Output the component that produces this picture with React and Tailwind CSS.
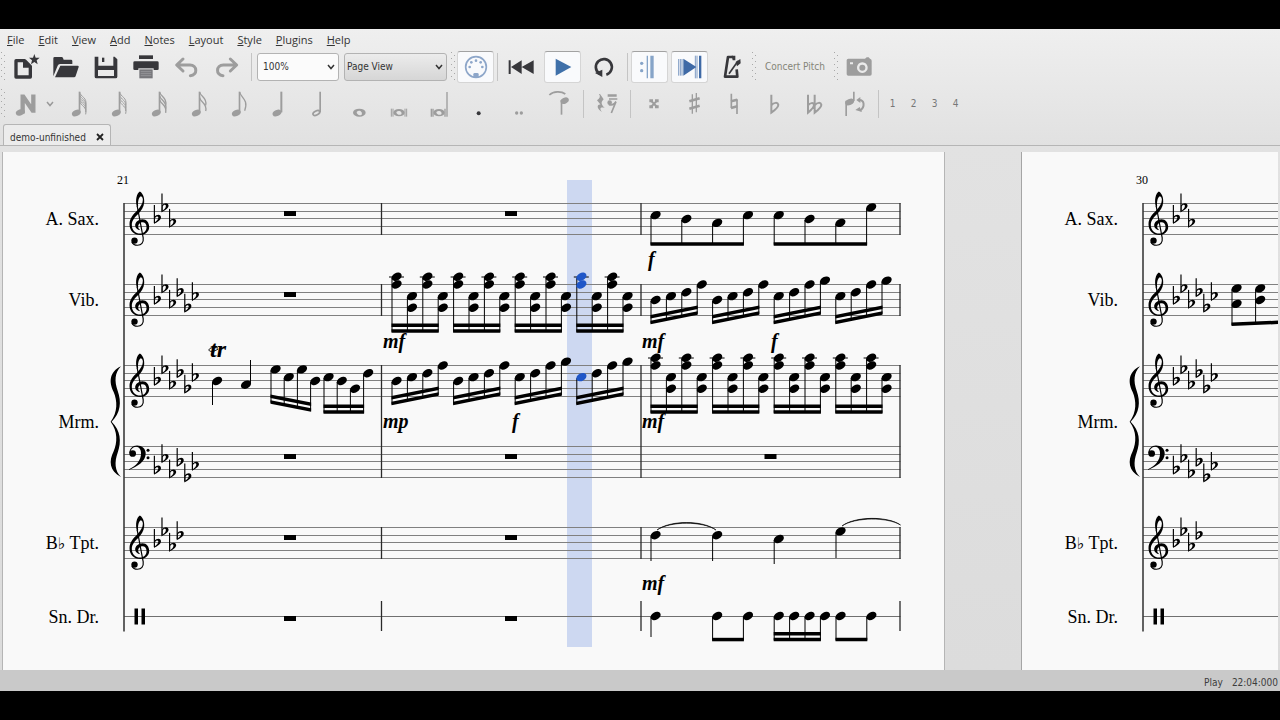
import React, { useState } from "react";

const MENUS = ["File", "Edit", "View", "Add", "Notes", "Layout", "Style", "Plugins", "Help"];

// distance between two neighbouring staff positions (half a space)
const STEP = 3.875;

const STAVES = [
  { name: "A. Sax.", top: 203.5, label: 225, flats: 3, clef: "treble" },
  { name: "Vib.", top: 284.5, label: 306, flats: 6, clef: "treble" },
  { name: "Mrm.", top: 365.5, label: 428, flats: 6, clef: "treble" },
  { name: "", top: 446.5, label: 0, flats: 6, clef: "bass" },
  { name: "Tpt.", top: 527.5, label: 549, flats: 4, clef: "treble" },
];
const DRUM_Y = 616.5;

const FLAT_POSITIONS = [4, 1, 5, 2, 6, 3];

/* ---------- toolbar icons ---------- */

const Icon = ({ children }) => (
  <svg viewBox="0 0 120 96" className="w-10 h-8 shrink-0" fill="currentColor" aria-hidden="true">
    {children}
  </svg>
);

const NewIcon = () => (
  <Icon>
    <path d="M30 29h26l17 17v32H30z" fill="none" stroke="currentColor" strokeWidth="10" strokeLinejoin="round" />
    <path d="M51 27v23h24z" />
    <path d="M85 9l4 11h12l-9 8 3 12-10-7-10 7 3-12-9-8h12z" />
  </Icon>
);

const OpenIcon = () => (
  <Icon>
    <path d="M22 22q0-4 4-4h21q3 0 4 3l2 5h22q4 0 4 4v9H42q-5 0-7 5L22 76z" />
    <path d="M43 44h52q4 0 3 4l-9 27q-1 4-5 4H27z" />
  </Icon>
);

const SaveIcon = () => (
  <Icon>
    <path
      fillRule="evenodd"
      d="M26 17h11v27h45V17h4l8 8v52q0 5-5 5H31q-5 0-5-5zM36 57h48v18H36z"
    />
    <path d="M48 20h7v13h-7z" />
  </Icon>
);

const PrintIcon = () => (
  <Icon>
    <path d="M39 13h42v11H39z" />
    <path d="M26 31h68q4 0 4 4v19q0 3-4 3H26q-4 0-4-3V35q0-4 4-4z" />
    <path d="M37 52h46v31H37z" fill="#ebebeb" />
    <path d="M40 55h40v27H40z" fill="#77777b" />
    <path d="M44 62h32M44 68h32M44 74h32" stroke="#a5a5a8" strokeWidth="2" />
  </Icon>
);

const UndoIcon = () => (
  <Icon>
    <path
      d="M51 24L32 42l19 18M34 42h38c22 0 24 31 1 32"
      fill="none"
      stroke="currentColor"
      strokeWidth="9"
      strokeLinecap="round"
      strokeLinejoin="round"
    />
  </Icon>
);

const RedoIcon = () => (
  <Icon>
    <path
      d="M73 24l19 18-19 18M90 42H52c-22 0-24 31-1 32"
      fill="none"
      stroke="currentColor"
      strokeWidth="9"
      strokeLinecap="round"
      strokeLinejoin="round"
    />
  </Icon>
);

const MidiIcon = () => (
  <Icon>
    <circle cx="60" cy="48" r="31" fill="none" stroke="currentColor" strokeWidth="5" />
    <circle cx="41" cy="48" r="4" />
    <circle cx="46" cy="34" r="4" />
    <circle cx="60" cy="29" r="4" />
    <circle cx="74" cy="34" r="4" />
    <circle cx="79" cy="48" r="4" />
    <path d="M52 80V70q0-4 4-4h8q4 0 4 4v10z" />
  </Icon>
);

const RewindIcon = () => (
  <Icon>
    <path d="M23 28h6v41h-6zM62 28v41L30 48zM98 28v41L62 48z" />
  </Icon>
);

const PlayIcon = () => (
  <Icon>
    <path d="M38 23l47 25-47 26z" />
  </Icon>
);

const LoopIcon = () => (
  <Icon>
    <path d="M67 71a24 24 0 1 0-21-3" fill="none" stroke="currentColor" strokeWidth="8" />
    <path d="M33 66l22-10v22z" />
  </Icon>
);

const RepeatIcon = () => (
  <Icon>
    <circle cx="35" cy="37" r="5" />
    <circle cx="35" cy="59" r="5" />
    <path d="M50 14h4v68h-4zM61 14h10v68H61z" />
  </Icon>
);

const PanIcon = () => (
  <Icon>
    <path d="M26 24v50M31 24v50M36 24v50M76 14v68M81 14v68" stroke="#7f9cc4" strokeWidth="3" />
    <path d="M40 23l39 25-39 26zM87 14h7v68h-7z" />
  </Icon>
);

const MetronomeIcon = () => (
  <Icon>
    <path d="M66 18H51L42 77h37l-2-22" fill="none" stroke="currentColor" strokeWidth="8" strokeLinejoin="round" />
    <path d="M54 68l27-38" stroke="currentColor" strokeWidth="5" />
    <path d="M74 33l14-9 1 13-11 9zM62 14h11v14h-8z" />
  </Icon>
);

const CameraIcon = () => (
  <Icon>
    <path
      fillRule="evenodd"
      d="M28 23h50l5-4h6l4 4q5 1 5 6v40q0 5-5 5H28q-5 0-5-5V28q0-5 5-5zM70 34a16 16 0 1 0 .1 0zM33 34v6h9v-6z"
    />
    <circle cx="70" cy="50" r="9" />
  </Icon>
);

const InputModeIcon = () => (
  <Icon>
    <path d="M46 74V22h8l24 35V22h8v50h-8L54 37v37z" stroke="currentColor" strokeWidth="5" />
    <ellipse cx="43" cy="73" rx="14" ry="9" transform="rotate(-20 43 73)" />
  </Icon>
);

// a filled note with up to five flags
const FlagNoteIcon = ({ flags }) => (
  <Icon>
    <ellipse cx="52" cy="75" rx="14" ry="9" transform="rotate(-25 52 75)" />
    <path d="M59 11h5v62h-5z" />
    {Array.from({ length: flags }, (_, i) => (
      <path
        key={i}
        d={flags === 1 ? "M62 12C64 28 90 34 77 68" : "M62 12C64 27 86 28 80 52"}
        transform={`translate(0 ${(i * 34) / flags})`}
        fill="none"
        stroke="currentColor"
        strokeWidth={flags > 3 ? 3 : 4}
      />
    ))}
  </Icon>
);

const HalfIcon = () => (
  <Icon>
    <ellipse cx="52" cy="75" rx="11" ry="6" transform="rotate(-28 52 75)" fill="none" stroke="currentColor" strokeWidth="5" />
    <path d="M61 11h5v62h-5z" />
  </Icon>
);

const QuarterIcon = () => (
  <Icon>
    <ellipse cx="54" cy="75" rx="14" ry="9" transform="rotate(-25 54 75)" />
    <path d="M64 11h6v62h-6z" />
  </Icon>
);

const WholeIcon = () => (
  <Icon>
    <path fillRule="evenodd" d="M42 74a19 12 0 1 1 38 0a19 12 0 1 1-38 0zM53 72c0 8 9 12 15 8c4-9-8-16-15-8z" />
  </Icon>
);

const BreveIcon = () => (
  <Icon>
    <path fillRule="evenodd" d="M43 74a17 11 0 1 1 34 0a17 11 0 1 1-34 0zM52 72c0 7 9 11 15 7c4-8-8-14-15-7z" />
    <path d="M37 62v24M42 62v24M78 62v24M83 62v24" stroke="currentColor" strokeWidth="3" />
  </Icon>
);

const LongaIcon = () => (
  <Icon>
    <path fillRule="evenodd" d="M43 74a17 11 0 1 1 34 0a17 11 0 1 1-34 0zM52 72c0 7 9 11 15 7c4-8-8-14-15-7z" />
    <path d="M37 62v24M42 62v24M78 62v24M84 12v74" stroke="currentColor" strokeWidth="4" />
  </Icon>
);

const DotIcon = () => (
  <Icon>
    <circle cx="59" cy="76" r="6" />
  </Icon>
);

const DoubleDotIcon = () => (
  <Icon>
    <circle cx="53" cy="75" r="5" />
    <circle cx="67" cy="75" r="5" />
  </Icon>
);

const TieIcon = () => (
  <Icon>
    <path d="M31 21c12-12 36-12 48-3" fill="none" stroke="currentColor" strokeWidth="5" />
    <path d="M65 36h5v44h-5z" />
    <ellipse cx="77" cy="38" rx="13" ry="9" transform="rotate(-25 77 38)" />
  </Icon>
);

const RestIcon = () => (
  <Icon>
    <path d="M39 18l11 16c-8 8-9 14 3 26c-14-4-16 3-8 12c-17-9-16-24-4-22L30 37c9-7 11-12 6-19z" />
    <path d="M62 19h27v7H62zM66 31h25v4H66z" />
    <circle cx="68" cy="44" r="7" />
    <path d="M66 50c10 3 16 0 21-9L73 75" fill="none" stroke="currentColor" strokeWidth="5" />
  </Icon>
);

const DoubleSharpIcon = () => (
  <Icon>
    <path d="M51 38l18 19M69 38L51 57" stroke="currentColor" strokeWidth="6" />
    <path d="M46 34h11v9H46zM63 34h11v9H63zM46 52h11v9H46zM63 52h11v9H63z" />
  </Icon>
);

const SharpIcon = () => (
  <Icon>
    <path d="M55 19v58M67 15v58" stroke="currentColor" strokeWidth="4" />
    <path d="M46 40l31-9M46 62l31-9" stroke="currentColor" strokeWidth="8" />
  </Icon>
);

const NaturalIcon = () => (
  <Icon>
    <path d="M52 17v43M69 34v44" stroke="currentColor" strokeWidth="5" />
    <path d="M51 40l19-5M51 60l19-5" stroke="currentColor" strokeWidth="8" />
  </Icon>
);

const FlatIcon = () => (
  <Icon>
    <path d="M52 20v54c13-9 22-16 21-24c-2-8-13-7-21 2" fill="none" stroke="currentColor" strokeWidth="6" />
  </Icon>
);

const DoubleFlatIcon = () => (
  <Icon>
    <path
      d="M42 20v54c11-9 19-16 18-24c-2-7-11-6-18 2M62 20v54c12-9 21-16 20-24c-2-8-12-7-20 2"
      fill="none"
      stroke="currentColor"
      strokeWidth="6"
    />
  </Icon>
);

const FlipIcon = () => (
  <Icon>
    <path d="M34 38h5v46h-5zM57 11h5v28h-5z" />
    <ellipse cx="47" cy="42" rx="14" ry="9" transform="rotate(-25 47 42)" />
    <path d="M73 36c19-2 21 21 5 32" fill="none" stroke="currentColor" strokeWidth="6" />
    <path d="M67 36l12-9v18zM64 66l13-9 7 15z" />
  </Icon>
);

/* ---------- toolbar parts ---------- */

const ToolButton = ({ label, disabled, children }) => (
  <button
    type="button"
    aria-label={label}
    disabled={disabled}
    className={`w-10 h-8 shrink-0 flex items-center justify-center ${
      disabled ? "text-[#9d9d9d]" : "text-[#37373b]"
    }`}
  >
    {children}
  </button>
);

const ToggleButton = ({ label, tint, children }) => {
  const [on, setOn] = useState(true);

  return (
    <button
      type="button"
      aria-label={label}
      aria-pressed={on}
      onClick={() => setOn(!on)}
      className={`w-[37px] h-8 shrink-0 flex items-center justify-center rounded-[3px] border ${tint} ${
        on
          ? "bg-[#f9fafc] border-[#d5d5d5] border-t-[#a2a2a2]"
          : "border-transparent"
      }`}
    >
      {children}
    </button>
  );
};

const Grip = () => (
  <svg viewBox="0 0 6 30" className="w-[6px] h-[30px] shrink-0" fill="#a8a8a8" aria-hidden="true">
    {[1, 7, 13, 19, 25].map((y) => (
      <g key={y}>
        <rect x="1" y={y - 1} width="1" height="1" />
        <rect x="4" y={y + 2} width="1" height="1" />
      </g>
    ))}
  </svg>
);

const Separator = () => <div className="w-px h-7 shrink-0 bg-[#c4c4c4]" />;

const Chevron = ({ className }) => (
  <svg
    viewBox="0 0 8 6"
    className={`w-2 h-[6px] ${className}`}
    fill="none"
    stroke="currentColor"
    strokeWidth="1.5"
    aria-hidden="true"
  >
    <path d="M1 1l3 3.5L7 1" />
  </svg>
);

const ComboBox = ({ label, options, look }) => (
  <div className="relative shrink-0 text-[#333]">
    <select
      aria-label={label}
      className={`appearance-none h-7 rounded-[3px] border border-[#b3b3b3] text-[10px] leading-4 text-[#333] outline-none ${look}`}
    >
      {options.map((o) => (
        <option key={o}>{o}</option>
      ))}
    </select>
    <Chevron className="absolute right-1 top-[11px] pointer-events-none" />
  </div>
);

/* ---------- score drawing ---------- */

const TrebleClef = ({ top }) => (
  <g transform={`translate(129.5 ${top - 12}) scale(0.334)`}>
    <path d="M22 46C17 26 21 6 31 0C41 6 45 20 44 32C43 46 35 58 26 67C15 78 7 86 7 100C7 116 18 126 32 126C43 126 51 118 51 107C51 97 46 92 39 92C31 92 26 99 26 105C26 110 29 114 33 116C23 115 17 109 17 102C17 92 26 83 39 83C51 83 59 93 59 106C59 120 47 130 32 130C13 130 0 117 0 98C0 80 12 68 23 57C33 46 40 36 40 25C40 20 38 15 34 14C28 17 24 29 26 44Z" />
    <path d="M23 43L41 139C43 154 35 161 24 161C17 161 10 158 7 151" fill="none" stroke="currentColor" strokeWidth="3.5" />
    <circle cx="15" cy="147" r="9.5" />
  </g>
);

const BassClef = ({ top }) => (
  <g transform={`translate(129 ${top - 1}) scale(0.334)`}>
    <path d="M0 73C25 63 50 48 50 24C50 9 39 0 24 0C11 0 1 10 1 23L4 23C4 13 11 4 21 4C31 4 36 13 36 24C36 43 23 61 0 71Z" />
    <circle cx="11" cy="24" r="10" />
    <circle cx="57" cy="14" r="4.5" />
    <circle cx="57" cy="37" r="4.5" />
  </g>
);

const Flat = ({ x, y }) => (
  <g transform={`translate(${x} ${y - 14}) scale(0.334)`}>
    <path d="M-1.5 0h3.5v54h-3.5z" />
    <path fillRule="evenodd" d="M0 36C8 26 21 28 20 38C18 47 8 51 -1 57ZM2 39V52C8 47 12 43 12 37C11 32 5 34 2 39Z" />
  </g>
);

const Brace = () => (
  <g transform="translate(0 340) scale(0.3333)">
    <path d="M363 79C328 96 326 126 341 156C352 182 354 216 332 245C354 274 352 308 341 334C326 364 328 392 363 411C344 392 343 366 353 338C365 304 362 272 335 245C362 218 365 186 353 152C343 124 344 98 363 79Z" />
  </g>
);

const Rest = ({ x, top }) => <rect x={x} y={top + 7.5} width="12" height="5" />;

const Head = ({ x, y, color }) => (
  <ellipse cx={x} cy={y} rx="5.4" ry="3.8" transform={`rotate(-28 ${x} ${y})`} fill={color || "currentColor"} />
);

// Stems down, joined by one or two beams. `from` and `to` are the bottom edge
// of the beam at its two ends, counted from the top line of the staff.
const Beamed = ({ x, top, gap = 15.4, notes, from, to = from, beams = 2, played }) => {
  const endX = x + gap * (notes.length - 1);
  const beamY = (i) => top + from + ((to - from) * i) / (notes.length - 1);

  return (
    <g>
      {notes.map((chord, i) => {
        const nx = x + gap * i;
        const ps = [].concat(chord);
        return (
          <g key={i}>
            <path
              d={`M${nx} ${top + Math.min(...ps) * STEP + 1}V${beamY(i) - 1}`}
              stroke="currentColor"
              strokeWidth="1"
            />
            {ps.includes(-2) && (
              <path d={`M${nx - 3} ${top - 7.5}h15`} stroke="currentColor" strokeWidth="1" />
            )}
            {ps.map((p) => (
              <Head
                key={p}
                x={nx + 4.6}
                y={top + p * STEP}
                color={played && i === 0 ? "#1f56c8" : undefined}
              />
            ))}
          </g>
        );
      })}
      {Array.from({ length: beams }, (_, b) => (
        <path
          key={b}
          d={`M${x - 0.5} ${top + from - b * 5.8}L${endX + 0.5} ${top + to - b * 5.8}v-3.5L${x - 0.5} ${
            top + from - b * 5.8 - 3.5
          }z`}
        />
      ))}
    </g>
  );
};

const QuarterDown = ({ x, y, end }) => (
  <g>
    <Head x={x + 4.6} y={y} />
    <path d={`M${x} ${y + 1}V${end}`} stroke="currentColor" strokeWidth="1" />
  </g>
);

const Dynamic = ({ x, y, children }) => (
  <text x={x} y={y} fontSize="20" className="font-['Liberation_Serif',serif] font-bold italic">
    {children}
  </text>
);

const RUNS = [
  [4, 3, 2, 0],
  [4, 3, 2, 0],
  [3, 2, 0, -1],
  [3, 2, 0, -1],
];
const CHORDS = [[-2, 0], [3, 6], [-2, 0], [3, 6]];

const Runs = ({ x, top, played }) =>
  RUNS.map((notes, i) => (
    <Beamed key={i} x={x + i * 61.6} top={top} notes={notes} from={39.8} to={30.3} played={played && i === 3} />
  ));

const Chords = ({ x, top, played }) =>
  [0, 1, 2, 3].map((i) => (
    <Beamed key={i} x={x + i * 61.6} top={top} notes={CHORDS} from={48.3} played={played && i === 3} />
  ));

// Staff lines, clefs, key signatures and instrument names of one system
const System = ({ number, end, bars }) => (
  <g>
    <text x="123" y="184" fontSize="12" textAnchor="middle" className="font-['Liberation_Serif',serif]">
      {number}
    </text>

    {STAVES.map((s) => (
      <g key={s.top}>
        {s.name && (
          <text x="99" y={s.label} fontSize="18" textAnchor="end" className="font-['Liberation_Serif',serif]">
            {s.name === "Tpt." ? (
              <>
                B<tspan className="font-['DejaVu_Sans',sans-serif]" fontSize="16">♭</tspan> Tpt.
              </>
            ) : (
              s.name
            )}
          </text>
        )}
        {[0, 8, 15, 23, 31].map((dy) => (
          <path key={dy} d={`M124 ${s.top + dy}H${end}`} stroke="#808080" strokeWidth="1" />
        ))}
        {s.clef === "treble" ? <TrebleClef top={s.top} /> : <BassClef top={s.top} />}
        {FLAT_POSITIONS.slice(0, s.flats).map((p, i) => (
          <Flat key={p} x={154.3 + i * 7.6} y={s.top + (s.clef === "bass" ? p + 2 : p) * STEP} />
        ))}
      </g>
    ))}

    <text x="99" y="623" fontSize="18" textAnchor="end" className="font-['Liberation_Serif',serif]">
      Sn. Dr.
    </text>
    <path d={`M124 ${DRUM_Y}H${end}`} stroke="#707070" strokeWidth="1" />
    <path d="M134.500 608.500h3.500v16h-3.500zM141.500 608.500h3.500v16h-3.500z" />

    <Brace />
    <path d="M124 203V631.5" stroke="#3c3c3c" strokeWidth="1.6" />
    {bars.map((x) => (
      <path
        key={x}
        d={`M${x} 203V235M${x} 284V316M${x} 365V478M${x} 527V559M${x} 601V631`}
        stroke="#2a2a2a"
        strokeWidth="1.3"
      />
    ))}
  </g>
);

const FirstPage = () => (
  <svg
    viewBox="3 152 941 518"
    className="w-[941px] h-[518px] bg-[#f9f9f9] text-black"
    fill="currentColor"
    role="img"
    aria-label="Score, measures 21 to 23"
  >
    <rect x="567" y="180" width="25" height="467" fill="#cdd8f1" />
    <System number="21" end={900.5} bars={[381.5, 641, 900]} />

    {/* Measure 21 */}
    {[203.5, 284.5, 446.5, 527.5, 608.5].map((top) => (
      <Rest key={top} x={284} top={top} />
    ))}
    <text x="210" y="357" fontSize="24" className="font-['Liberation_Serif',serif] font-bold italic">
      tr
    </text>
    <path d="M218 349c-4 3-9 3-9 1c0-2 4-3 9-2" fill="none" stroke="currentColor" strokeWidth="1" />
    <QuarterDown x={212.5} y={381} end={405} />
    <Head x={246} y={384.7} />
    <path d="M250.5 384V360" stroke="currentColor" strokeWidth="1" />
    <Beamed x={271} top={365.5} gap={13.2} notes={[1, 3, 1, 4]} from={38.2} to={46.2} />
    <Beamed x={324} top={365.5} gap={13.2} notes={[3, 4, 6, 2]} from={48.2} />

    {/* Measure 22 */}
    {[203.5, 446.5, 527.5, 608.5].map((top) => (
      <Rest key={top} x={505} top={top} />
    ))}
    <Chords x={392} top={284.5} played />
    <Runs x={392} top={365.5} played />
    <Dynamic x={383} y={348}>mf</Dynamic>
    <Dynamic x={383} y={428}>mp</Dynamic>
    <Dynamic x={512} y={428}>f</Dynamic>

    {/* Measure 23 */}
    <Beamed x={651} top={203.5} gap={30.8} notes={[3, 4, 5, 3]} from={42.2} beams={1} />
    <Beamed x={774.2} top={203.5} gap={30.8} notes={[3, 4, 5, 1]} from={42.2} beams={1} />
    <Runs x={651} top={284.5} />
    <Chords x={651} top={365.5} />
    <Rest x={764.5} top={446.5} />
    <QuarterDown x={651} y={535.2} end={561} />
    <QuarterDown x={712.6} y={535.2} end={561} />
    <QuarterDown x={774.2} y={539} end={564} />
    <QuarterDown x={836} y={531.4} end={558} />
    <path d="M657 530C670 520 703 520 716 530C703 521 670 521 657 530Z" stroke="currentColor" strokeWidth="0.6" />
    <path d="M842 526C855 516 888 516 900.5 525C888 517 855 517 842 526Z" stroke="currentColor" strokeWidth="0.6" />
    <Dynamic x={648} y={266}>f</Dynamic>
    <Dynamic x={642} y={348}>mf</Dynamic>
    <Dynamic x={771} y={348}>f</Dynamic>
    <Dynamic x={642} y={428}>mf</Dynamic>
    <Dynamic x={642} y={590}>mf</Dynamic>
    <QuarterDown x={651} y={616} end={637} />
    <Beamed x={712.6} top={616} gap={30.8} notes={[0, 0]} from={25.3} beams={1} />
    <Beamed x={774.2} top={616} notes={[0, 0, 0, 0]} from={25.3} />
    <Beamed x={836} top={616} gap={30.8} notes={[0, 0]} from={25.3} beams={1} />
  </svg>
);

const SecondPage = () => (
  <svg
    viewBox="3 152 941 518"
    className="w-[941px] h-[518px] bg-[#f9f9f9] text-black"
    fill="currentColor"
    role="img"
    aria-label="Score, measure 30 onwards"
  >
    <System number="30" end={900.5} bars={[900]} />
    <Beamed x={213} top={284.5} gap={23.6} notes={[[1, 5], [1, 4], [1, 5], [1, 4]]} from={41.5} to={38.5} beams={1} />
  </svg>
);

const App = () => {
  return (
    <div className="min-h-screen flex flex-col bg-black py-[29px] font-['DejaVu_Sans_Condensed','Open_Sans',sans-serif] text-[#333]">
      <div className="flex-1 flex flex-col bg-[#c9c9c9]">
        <header className="bg-linear-to-b from-[#efefef] to-[#e1e1e1]">
          {/* Menu bar */}
          <nav className="flex items-center gap-[14px] h-[21px] px-[7px] font-['Open_Sans',sans-serif] text-[11px] leading-4">
            {MENUS.map((m) => (
              <button key={m} type="button">
                <u className="underline-offset-1">{m[0]}</u>
                {m.slice(1)}
              </button>
            ))}
          </nav>

          {/* Main toolbar */}
          <div className="flex items-center h-[33px] overflow-hidden">
            <Grip />
            <ToolButton label="New"><NewIcon /></ToolButton>
            <ToolButton label="Open"><OpenIcon /></ToolButton>
            <ToolButton label="Save"><SaveIcon /></ToolButton>
            <ToolButton label="Print"><PrintIcon /></ToolButton>
            <ToolButton label="Undo" disabled><UndoIcon /></ToolButton>
            <ToolButton label="Redo" disabled><RedoIcon /></ToolButton>
            <div className="flex items-center gap-[5px] pl-[5px]">
              <Separator />
              <ComboBox label="Zoom" options={["100%", "150%", "200%"]} look="w-[82px] pl-[5px] bg-[#fbfbfb]" />
              <ComboBox
                label="View mode"
                options={["Page View", "Continuous View"]}
                look="w-[103px] pl-[2px] bg-linear-to-b from-[#ececec] to-[#d6d6d6]"
              />
            </div>
            <div className="flex items-center gap-[1px] pl-[3px]">
              <Grip />
              <ToggleButton label="MIDI input" tint="text-[#8da6c9]"><MidiIcon /></ToggleButton>
            </div>
            <div className="flex items-center gap-[3px] pl-[3px]">
              <Separator />
              <ToolButton label="Rewind"><RewindIcon /></ToolButton>
              <ToggleButton label="Play" tint="text-[#3f70a9]"><PlayIcon /></ToggleButton>
              <ToolButton label="Loop"><LoopIcon /></ToolButton>
              <Separator />
              <ToggleButton label="Play repeats" tint="text-[#86a4c8]"><RepeatIcon /></ToggleButton>
              <ToggleButton label="Pan score" tint="text-[#3f6aa6]"><PanIcon /></ToggleButton>
              <ToolButton label="Metronome"><MetronomeIcon /></ToolButton>
            </div>
            <Grip />
            <button type="button" disabled className="shrink-0 pl-2 pr-[6px] text-[10px] leading-4 text-[#858578]">
              Concert Pitch
            </button>
            <div className="flex items-center pl-[2px]">
              <Grip />
              <ToolButton label="Image capture" disabled><CameraIcon /></ToolButton>
            </div>
          </div>

          {/* Note input toolbar */}
          <div className="flex items-center h-[41px] overflow-hidden">
            <Grip />
            <ToolButton label="Note input" disabled><InputModeIcon /></ToolButton>
            <button type="button" disabled aria-label="Input modes" className="w-[13px] text-[#999] flex">
              <Chevron className="" />
            </button>
            <ToolButton label="128th note" disabled><FlagNoteIcon flags={5} /></ToolButton>
            <ToolButton label="64th note" disabled><FlagNoteIcon flags={4} /></ToolButton>
            <ToolButton label="32nd note" disabled><FlagNoteIcon flags={3} /></ToolButton>
            <ToolButton label="16th note" disabled><FlagNoteIcon flags={2} /></ToolButton>
            <ToolButton label="Eighth note" disabled><FlagNoteIcon flags={1} /></ToolButton>
            <ToolButton label="Quarter note" disabled><QuarterIcon /></ToolButton>
            <ToolButton label="Half note" disabled><HalfIcon /></ToolButton>
            <ToolButton label="Whole note" disabled><WholeIcon /></ToolButton>
            <ToolButton label="Breve" disabled><BreveIcon /></ToolButton>
            <ToolButton label="Longa" disabled><LongaIcon /></ToolButton>
            <ToolButton label="Dot"><DotIcon /></ToolButton>
            <ToolButton label="Double dot" disabled><DoubleDotIcon /></ToolButton>
            <ToolButton label="Tie" disabled><TieIcon /></ToolButton>
            <div className="flex items-center gap-[3px] pl-1">
              <Separator />
              <ToolButton label="Rest" disabled><RestIcon /></ToolButton>
              <Separator />
            </div>
            <div className="flex items-center pl-[3px]">
              <ToolButton label="Double sharp" disabled><DoubleSharpIcon /></ToolButton>
              <ToolButton label="Sharp" disabled><SharpIcon /></ToolButton>
              <ToolButton label="Natural" disabled><NaturalIcon /></ToolButton>
              <ToolButton label="Flat" disabled><FlatIcon /></ToolButton>
              <ToolButton label="Double flat" disabled><DoubleFlatIcon /></ToolButton>
              <ToolButton label="Flip direction" disabled><FlipIcon /></ToolButton>
            </div>
            <div className="flex items-center pl-1">
              <Separator />
              <div className="flex pl-[3px]">
                {[1, 2, 3, 4].map((v) => (
                  <button key={v} type="button" disabled className="w-[21px] text-[10px] leading-4 text-[#777]">
                    {v}
                  </button>
                ))}
              </div>
            </div>
          </div>

          {/* Document tabs */}
          <div className="flex h-[22px] pl-[3px] border-b border-[#b5b5b5]">
            <div className="flex items-center gap-[10px] px-[6px] pt-[5px] rounded-t-[3px] border border-b-0 border-[#b5b5b5] bg-[#ececec] text-[10px] leading-4">
              <span>demo-unfinished</span>
              <button type="button" aria-label="Close tab" className="pb-[2px]">
                <svg viewBox="0 0 8 8" className="w-2 h-2" stroke="#222" strokeWidth="1.8">
                  <path d="M1 1l6 6M7 1L1 7" />
                </svg>
              </button>
            </div>
          </div>
        </header>

        {/* Score canvas */}
        <main className="px-[2px] pt-[6px] bg-linear-to-b from-[#e2e2e2] to-[#dcdcdc]">
          <div className="flex gap-[76px] overflow-hidden">
            <div className="shrink-0 border-x border-[#b5b5b5]">
              <FirstPage />
            </div>
            <div className="shrink-0 border-x border-[#a5a5a5]">
              <SecondPage />
            </div>
          </div>
        </main>

        {/* Status bar */}
        <footer className="flex-1 flex items-center justify-end gap-[9px] px-[2px] pt-1 text-[10px] leading-4 text-[#3c3c3c]">
          <span>Play</span>
          <span>22:04:000</span>
        </footer>
      </div>
    </div>
  );
};

export default App;
